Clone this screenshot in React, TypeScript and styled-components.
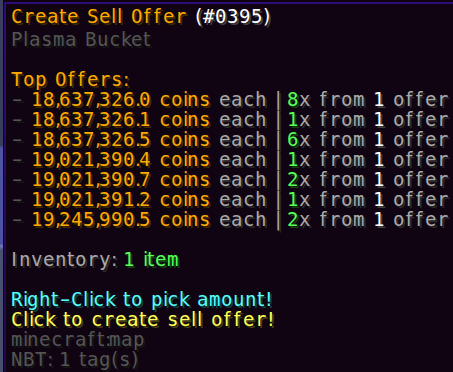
import React from "react";
import styled, { createGlobalStyle } from "styled-components";

const GOLD = "#FFAA00";
const WHITE = "#FFFFFF";
const GRAY = "#AAAAAA";
const DGRAY = "#555555";
const GREEN = "#55FF55";
const AQUA = "#55FFFF";
const YELLOW = "#FFFF55";

const shadowOf = (hex: string) => {
  const n = parseInt(hex.slice(1), 16);
  const r = ((n >> 16) & 0xfc) >> 2;
  const g = ((n >> 8) & 0xfc) >> 2;
  const b = (n & 0xfc) >> 2;
  return `rgb(${r}, ${g}, ${b})`;
};

const ADV: Record<string, number> = {
  " ": 4, "!": 2, "'": 2, ",": 2, ".": 2, ":": 2, ";": 2, "|": 2, i: 2,
  l: 3, "`": 3, I: 4, t: 4, "(": 4, ")": 4, "[": 4, "]": 4, "{": 4, "}": 4,
  '"': 4, "*": 4, f: 5, k: 5, "<": 5, ">": 5, "@": 7, "~": 7,
};
const advOf = (c: string) => ADV[c] ?? 6;

const GlobalStyle = createGlobalStyle`
  html, body { margin: 0; padding: 0; }
  body { width: 453px; height: 372px; overflow: hidden; background: #100412; }
`;

const Screen = styled.div`
  width: 453px;
  height: 372px;
  overflow: hidden;
  box-sizing: border-box;
  display: flex;
  padding-left: 3px;
  background: linear-gradient(
    to bottom,
    #3a405c 0px,
    #373d5a 145px,
    #4e54a2 148px,
    #4c52a0 244px,
    #767bbd 246px,
    #4a5170 250px,
    #474e6c 372px
  );
`;

const Tooltip = styled.div`
  flex: 1;
  display: flex;
  padding: 2px 0 0 1px;
  background: #100412;
`;

const Frame = styled.div`
  flex: 1;
  border-left: 2px solid #2c0b72;
  border-top: 2px solid #2c0b72;
  border-image: linear-gradient(to bottom, #2e0c78, #1f0848) 1;
  padding: 5px 0 0 5px;
  display: flex;
  flex-direction: column;
`;

const Line = styled.div<{ $gap?: number }>`
  height: 20px;
  margin-bottom: ${(p) => p.$gap ?? 0}px;
  line-height: 15px;
  white-space: nowrap;
  font-size: 19px;
  font-weight: 400;
`;

const Segment = styled.span<{ $color: string }>`
  color: ${(p) => p.$color};
  text-shadow: 2px 2px 0 ${(p) => shadowOf(p.$color)};
`;

const Glyph = styled.span<{ $narrow: boolean; $stretch: boolean }>`
  display: inline-block;
  box-sizing: border-box;
  padding-right: 2px;
  text-align: center;
  font-family: ${(p) =>
    p.$narrow ? `"DejaVu Sans", sans-serif` : `"DejaVu Sans Mono", monospace`};
  transform: ${(p) => (p.$stretch ? "scaleX(1.6)" : "none")};
  transform-origin: 5px 50%;
`;

type Seg = [string, string];

const McText: React.FC<{ segs: Seg[] }> = ({ segs }) => (
  <>
    {segs.map(([text, color], si) => (
      <Segment key={si} $color={color}>
        {Array.from(text).map((c, ci) => {
          const a = advOf(c);
          return (
            <Glyph
              key={ci}
              $narrow={a <= 5}
              $stretch={c === "-"}
              style={{ width: a * 2 }}
            >
              {c === " " ? "\u00a0" : c}
            </Glyph>
          );
        })}
      </Segment>
    ))}
  </>
);

const offers: [string, string][] = [
  ["18,637,326.0", "8"],
  ["18,637,326.1", "1"],
  ["18,637,326.5", "6"],
  ["19,021,390.4", "1"],
  ["19,021,390.7", "2"],
  ["19,021,391.2", "1"],
  ["19,245,990.5", "2"],
];

export default function App() {
  return (
    <>
      <GlobalStyle />
      <Screen>
        <Tooltip>
          <Frame>
            <Line $gap={3}>
              <McText segs={[["Create Sell Offer", GOLD], [" (#0395)", WHITE]]} />
            </Line>
            <Line>
              <McText segs={[["Plasma Bucket", DGRAY]]} />
            </Line>
            <Line />
            <Line>
              <McText segs={[["Top Offers:", GOLD]]} />
            </Line>
            {offers.map(([price, n]) => (
              <Line key={price}>
                <McText
                  segs={[
                    ["- ", DGRAY],
                    [`${price} coins`, GOLD],
                    [" each | ", GRAY],
                    [n, GREEN],
                    ["x from ", GRAY],
                    ["1", WHITE],
                    [" offer", GRAY],
                  ]}
                />
              </Line>
            ))}
            <Line />
            <Line>
              <McText segs={[["Inventory: ", GRAY], ["1 item", GREEN]]} />
            </Line>
            <Line />
            <Line>
              <McText segs={[["Right-Click to pick amount!", AQUA]]} />
            </Line>
            <Line>
              <McText segs={[["Click to create sell offer!", YELLOW]]} />
            </Line>
            <Line>
              <McText segs={[["minecraft:map", DGRAY]]} />
            </Line>
            <Line>
              <McText segs={[["NBT: 1 tag(s)", DGRAY]]} />
            </Line>
          </Frame>
        </Tooltip>
      </Screen>
    </>
  );
}
